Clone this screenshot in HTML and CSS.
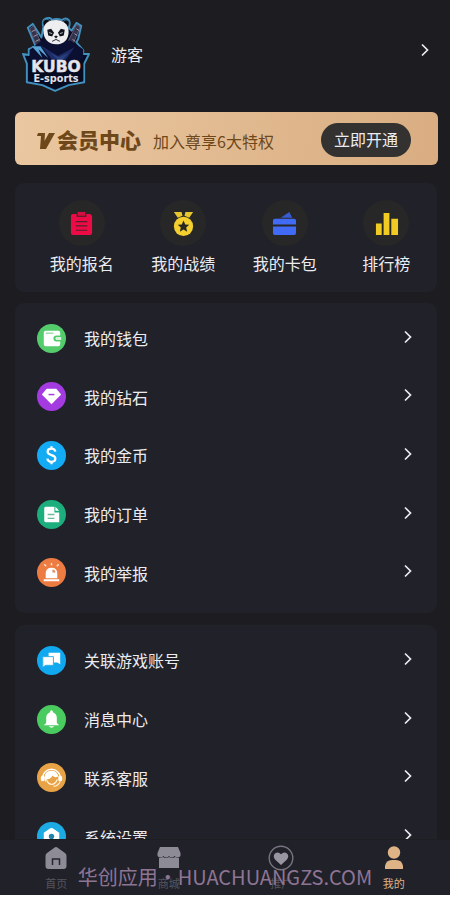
FILE: index.html
```html
<!DOCTYPE html>
<html lang="zh-CN">
<head>
<meta charset="utf-8">
<meta name="viewport" content="width=device-width, initial-scale=1">
<title>我的</title>
<link rel="stylesheet" href="styles.css">
</head>
<body>
<svg class="defs" aria-hidden="true">
  <symbol id="chevron" viewBox="0 0 10 14"><path d="M2 1.5 7.5 7 2 12.5" fill="none" stroke="currentColor" stroke-width="1.7"/></symbol>
</svg>
<main class="content">
  <a class="profile" href="#profile">
    <svg class="logo" viewBox="0 0 70 78" role="img" aria-label="KUBO E-sports">
      <path d="M22 11C19 1 29 0 31 4Q35 2 41 4C47 0 51 5 48 12L51 15 56 7 61 10 58 23 56 27 63 35 63 39 69 39 64 49 64 68 48 71 34 77 21 71 5 68 5 49 1 39 7 40 7 34 14 31 6 12 11 8 20 22Z" fill="#080c25" stroke="#4190bd" stroke-width="2" stroke-linejoin="round"/>
      <path d="M8 13l4-3 8 19-5 3zM56 9l4 2-8 19-5-3z" fill="#34334c" stroke="#75657f" stroke-width=".8"/>
      <path d="m10 16 4-2m-2 7 4-2m-2 7 4-2m38-11 3 2m-5 3 3 2m-5 4 3 2" stroke="#a89aae" stroke-width="1"/>
      <path d="M20 25 8 35v10l10 4h34l11-6V34l-13-9Z" fill="#0b1033"/>
      <path d="M10 31 21 43 17 34 27 43 19 31Z" fill="#57a4d5"/>
      <path d="m19 30 12 15h14l9-13-17 9Z" fill="#1d2b66"/>
      <path d="m29 38 8 7h5l6-7-10 4Z" fill="#29407f"/>
      <path d="M23 12C18 3 27 1 30 6M42 6c5-5 9 0 5 6" fill="#0a0c15" stroke="#3d7fa7"/>
      <path d="M22 15C22 7 28 4 35 4s13 4 13 12c0 8-5 13-13 13-8 0-13-6-13-14Z" fill="#eeeef0"/>
      <path d="m26 14 4-1 3 4-2 4-4-1Zm18 0-4-1-3 4 2 4 4-1Z" fill="#11131d"/>
      <path d="m28 17 3 1m11-1-3 1" stroke="#eee" stroke-width=".8"/>
      <path d="m33 21 2-1 2 1-2 2Z" fill="#171925"/>
      <path d="m31 26 4-2 4 2" fill="none" stroke="#242634"/>
      <path d="M7 46h56v20l-15 3-13 5-13-5-15-3Z" fill="#070b20"/>
      <text class="logo-name" x="35" y="58" text-anchor="middle">KUBO</text>
      <text class="logo-sub" x="35" y="68" text-anchor="middle">E-sports</text>
    </svg>
    <span class="user">游客</span>
    <svg class="chevron"><use href="#chevron"/></svg>
  </a>

  <section class="vip">
    <svg class="vip-mark" viewBox="0 0 18 18" aria-hidden="true"><path d="M1 1h7L7.500 9 12 1h6L9 17H3L4 4H0Z" fill="#6e481a"/></svg>
    <h1 class="vip-title">会员中心</h1>
    <p class="vip-note">加入尊享6大特权</p>
    <button class="vip-button" type="button">立即开通</button>
  </section>

  <nav class="card quick" aria-label="快捷入口">
    <a class="quick-item" href="#signup">
      <span class="disc"><svg viewBox="0 0 26 26"><path d="M4 3h4v3h10V3h3q3 0 3 3v17q0 2-2 2H4q-2 0-2-2V6q0-3 2-3Z" fill="#ed0b45"/><path d="M9 1h8v4H9Z" fill="#d90c40"/><path d="M7 11h12M7 15.500h12M7 20h12" stroke="#52202c" stroke-width="1.200"/></svg></span>
      <span>我的报名</span>
    </a>
    <a class="quick-item" href="#record">
      <span class="disc"><svg viewBox="0 0 26 26"><path d="M3 1h8l1 4-5 2Zm12 0h8l-4 6-5-2Z" fill="#e7c72d"/><circle cx="13" cy="16" r="10" fill="#f4cf2e"/><path d="m13 10 1.800 4 4.200.4-3.200 2.800 1 4.300L13 19.200l-3.800 2.300 1-4.300L7 14.400l4.200-.4Z" fill="#292820"/></svg></span>
      <span>我的战绩</span>
    </a>
    <a class="quick-item" href="#cards">
      <span class="disc"><svg viewBox="0 0 26 26"><path d="m9 7 9-6 3 6Z" fill="#385bd1"/><path d="M3 8h20q2 0 2 2v4H1v-4q0-2 2-2ZM1 16h24v7q0 2-2 2H3q-2 0-2-2Z" fill="#416bf4"/></svg></span>
      <span>我的卡包</span>
    </a>
    <a class="quick-item" href="#rank">
      <span class="disc"><svg viewBox="0 0 26 26"><path d="M2 13h6v12H2Zm8-11h6v23h-6Zm8 6h7v17h-7Z" fill="#f1cb22"/></svg></span>
      <span>排行榜</span>
    </a>
  </nav>

  <ul class="card list assets">
    <li><a href="#wallet">
      <svg class="icon" viewBox="0 0 30 30"><circle cx="15" cy="15" r="15" fill="#55cc6c"/><path d="M9 7h13q2 0 2 2v3h-4q-3 0-3 3t3 3h4v3q0 2-2 2H9q-2 0-2-2V9q0-2 2-2Z" fill="#fff"/><path d="M9 9.500h8" stroke="#83d590" stroke-width="1.200"/><path d="M20 13.500h5v3h-5q-2-1.500 0-3Z" fill="#d9f5de"/></svg>
      <span>我的钱包</span><svg class="chevron"><use href="#chevron"/></svg></a></li>
    <li><a href="#diamond">
      <svg class="icon" viewBox="0 0 30 30"><circle cx="15" cy="15" r="15" fill="#a33be1"/><path d="M10 7h10l5 6-10 10L5 13Z" fill="#fff"/><path d="M12 13h6" stroke="#a33be1" stroke-width="1.500"/></svg>
      <span>我的钻石</span><svg class="chevron"><use href="#chevron"/></svg></a></li>
    <li><a href="#coins">
      <svg class="icon" viewBox="0 0 30 30"><circle cx="15" cy="15" r="15" fill="#13abf3"/><path d="M19 11c-.4-2-2-3-4-3-2.300 0-4 1.100-4 3.100 0 4.500 8 2.500 8 7 0 2.200-1.700 3.400-4 3.400s-4-1.200-4.300-3.300M15 5.500V8m0 13v3" fill="none" stroke="#fff" stroke-width="2.300"/></svg>
      <span>我的金币</span><svg class="chevron"><use href="#chevron"/></svg></a></li>
    <li><a href="#orders">
      <svg class="icon" viewBox="0 0 30 30"><circle cx="15" cy="15" r="15" fill="#1dae7d"/><path d="M9 7h9v6h5v10H9q-1.500 0-1.500-1.500v-13Q7.500 7 9 7Zm10 0 4 4h-4Z" fill="#fff"/><path d="M11 15h7m-7 4h7" stroke="#65bd9a" stroke-width="1.400"/></svg>
      <span>我的订单</span><svg class="chevron"><use href="#chevron"/></svg></a></li>
    <li><a href="#report">
      <svg class="icon" viewBox="0 0 30 30"><circle cx="15" cy="15" r="15" fill="#ed7c42"/><path d="M9 21v-5q0-6 6-6t6 6v5ZM7 22h16v2H7Z" fill="#fff"/><path d="m8 7 1 1m6-2v1m7 0-1 1" stroke="#ffe0cd" stroke-width="1.700" stroke-linecap="round"/><path d="M16 12q3 0 3 3h-3Z" fill="#e58b60"/></svg>
      <span>我的举报</span><svg class="chevron"><use href="#chevron"/></svg></a></li>
  </ul>

  <ul class="card list services">
    <li><a href="#accounts">
      <svg class="icon" viewBox="0 0 30 30"><circle cx="15" cy="15" r="15" fill="#10a8ef"/><path d="M12 7h12v12l-3-2h-9Z" fill="#fff"/><path d="M6 11h11v9h-8l-3 2Z" fill="#fff" stroke="#30aee9" stroke-width="1"/></svg>
      <span>关联游戏账号</span><svg class="chevron"><use href="#chevron"/></svg></a></li>
    <li><a href="#messages">
      <svg class="icon" viewBox="0 0 30 30"><circle cx="15" cy="15" r="15" fill="#4acb60"/><path d="M13.500 7.500q0-2 1.500-2t1.500 2q4 1.500 4 6v5l2.500 2.500H7l2.500-2.500v-5q0-4.500 4-6ZM12 22h6q-3 3-6 0Z" fill="#fff"/></svg>
      <span>消息中心</span><svg class="chevron"><use href="#chevron"/></svg></a></li>
    <li><a href="#support">
      <svg class="icon" viewBox="0 0 30 30"><circle cx="15" cy="15" r="15" fill="#e8a347"/><path d="M6 15a9 8.500 0 0 1 18 0" fill="none" stroke="#fff" stroke-width="1.600"/><path d="M8 15q0-7 7-7 6 0 7 6-4 2-6-1-2 4-6 4l-1 3q-1-2-1-5Z" fill="#fff"/><rect x="4" y="13" width="4" height="6" rx="2" fill="#fff"/><rect x="22" y="13" width="4" height="6" rx="2" fill="#fff"/><path d="M10 18q2 4 5 4 4 0 6-5m3 2q-2 5-7 5" fill="none" stroke="#fff2dd" stroke-width="1.300"/></svg>
      <span>联系客服</span><svg class="chevron"><use href="#chevron"/></svg></a></li>
    <li><a href="#settings">
      <svg class="icon" viewBox="0 0 30 30"><circle cx="15" cy="15" r="15" fill="#1dabe4"/><path d="m13 7 2-1 2 1 6 4v9l-8 4-8-4v-9Z" fill="#fff"/><circle cx="15" cy="15" r="2.800" fill="#2382a8"/></svg>
      <span>系统设置</span><svg class="chevron"><use href="#chevron"/></svg></a></li>
  </ul>
</main>

<footer class="footer">
  <nav class="tabs" aria-label="主导航">
    <a href="#home"><svg viewBox="0 0 26 26"><path d="M13 2q1 0 2 1l7 5q1.500 1 1.500 3v10q0 3-3 3h-15q-3 0-3-3V11q0-2 1.500-3l7-5q1-1 2-1Z" fill="#8d8c96"/><path d="M9.500 20v-6h7v6" fill="none" stroke="#24252e" stroke-width="1.500"/></svg><span>首页</span></a>
    <a href="#shop"><svg viewBox="0 0 26 26"><path d="M4 2h18l2.500 6v3q-3 3-6 0-3 3-5.500 0-3 3-5.500 0-3 3-6 0V8Z" fill="#8d8c96"/><path d="M3 13q2 0 4-1 3 2 6 0 3 2 6 0 2 1 4 1v10H3Z" fill="#8d8c96"/></svg><span>商城</span></a>
    <a href="#share"><svg viewBox="0 0 26 26"><circle cx="13" cy="13" r="11.800" fill="none" stroke="#777680" stroke-width="1.400"/><path d="M13 20 7 14.500Q4.500 11 7 8.500q3-2.500 6 .8 3-3.300 6-.8 2.500 2.500 0 6Z" fill="#9796a1"/></svg><span>推广</span></a>
    <a class="active" href="#mine"><svg viewBox="0 0 26 26"><circle cx="13" cy="7.500" r="6.200" fill="#deb487"/><path d="M4 24v-3q1-6 7-6h4q6 0 7 6v3Z" fill="#deb487"/></svg><span>我的</span></a>
  </nav>
  <p class="watermark">华创应用・HUACHUANGZS.COM</p>
</footer>
</body>
</html>
```

FILE: styles.css
```css
* {
  box-sizing: border-box;
}

body {
  display: flex;
  flex-direction: column;
  height: 100vh;
  margin: 0;
  padding-bottom: 5px;
  background: #fff;
  color: #ececf0;
  font-family: "Noto Sans CJK SC", sans-serif;
  font-size: 16px;
  line-height: 24px;
}

a {
  color: inherit;
  text-decoration: none;
}

h1,
p,
ul {
  margin: 0;
  padding: 0;
}

.defs {
  display: none;
}

.content {
  flex: 1;
  min-height: 0;
  overflow: hidden;
  padding: 0 13px 0 15px;
  background: #1d1c20;
}

.chevron {
  width: 10px;
  height: 14px;
  margin-left: auto;
}

.profile {
  display: flex;
  align-items: center;
  height: 112px;
  padding: 0 7px 4px;
}

.logo {
  width: 68px;
  height: 78px;
  margin-right: 21px;
}

.profile .chevron {
  margin-bottom: 8px;
}

.logo-name {
  fill: #e4e4ec;
  stroke: #e4e4ec;
  stroke-width: .5px;
  font: bold 16px "DejaVu Sans", sans-serif;
}

.logo-sub {
  fill: #e1e2ed;
  font: bold 10px "DejaVu Sans", sans-serif;
}

.vip {
  display: flex;
  align-items: center;
  height: 53px;
  margin-right: -1px;
  padding: 0 27px 0 22px;
  border-radius: 6px;
  background: linear-gradient(100deg, #eac7a0, #d9ad81);
  color: #6e481a;
}

.vip-mark {
  width: 18px;
  height: 18px;
  margin-top: 4px;
}

.vip-title {
  margin: 0 12px 0 2px;
  font-size: 21px;
  font-weight: 900;
}

.vip-note {
  margin-top: 4px;
}

.vip-button {
  height: 34px;
  margin: 3px 0 0 auto;
  padding: 0 13px 2px;
  border: 0;
  border-radius: 17px;
  background: #333231;
  color: #ececf0;
  font: inherit;
}

.card {
  border-radius: 9px;
  background: #21212a;
}

.quick {
  display: grid;
  grid-template-columns: repeat(4, 1fr);
  margin-top: 18px;
  padding: 17px 0 17px 16px;
}

.quick-item {
  display: flex;
  flex-direction: column;
  align-items: center;
  gap: 5px;
}

.disc {
  display: grid;
  place-items: center;
  width: 46px;
  height: 46px;
  border-radius: 50%;
  background: #272727;
}

.disc svg {
  width: 25px;
  height: 25px;
}

.list {
  display: grid;
  grid-auto-rows: minmax(58px, auto);
  align-content: stretch;
  padding: 6px 24px 11px 22px;
  list-style: none;
}

.list li {
  display: grid;
}

.list a {
  display: flex;
  align-items: center;
}

.assets {
  min-height: 310px;
  margin-top: 11px;
}

.services {
  min-height: 252px;
  margin-top: 12px;
}

.icon {
  width: 29px;
  height: 29px;
  margin-right: 18px;
}

.list .chevron {
  margin-bottom: 3px;
}

.footer {
  position: relative;
  background: #21212a;
}

.tabs {
  display: grid;
  grid-template-columns: repeat(4, 1fr);
  border-top: 1px solid #1d1d22;
  color: #55555c;
  font-size: 11px;
  line-height: 16px;
}

.tabs a {
  display: flex;
  flex-direction: column;
  align-items: center;
  gap: 4px;
  padding: 5px 0 4px;
}

.tabs svg {
  width: 26px;
  height: 26px;
}

.tabs .active {
  color: #deb487;
}

.watermark {
  position: absolute;
  inset: auto 0 6px;
  color: #8e7593;
  font-size: 20px;
  text-align: center;
  white-space: nowrap;
  pointer-events: none;
}
```
